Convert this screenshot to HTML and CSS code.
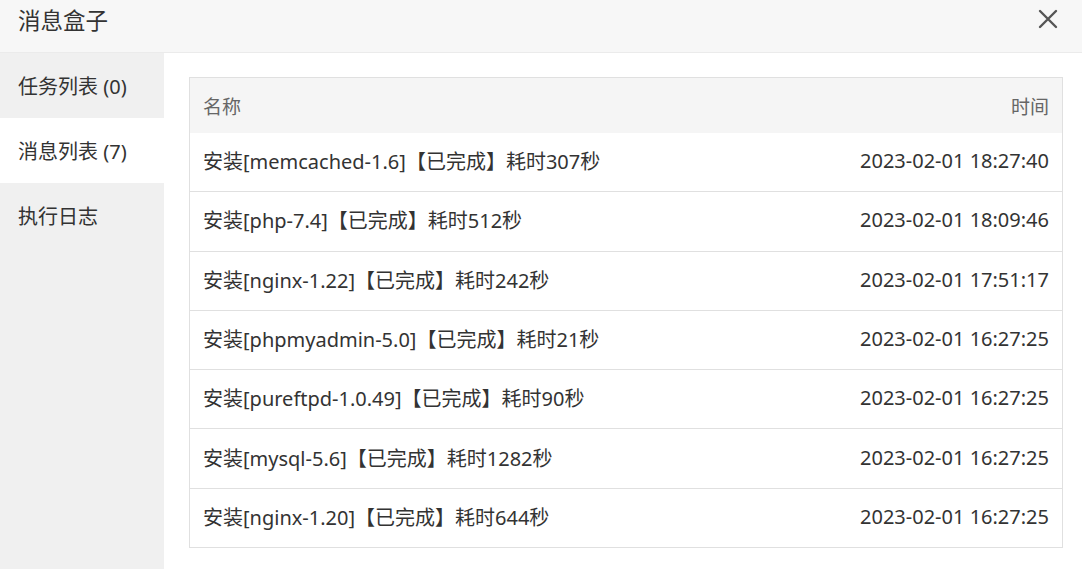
FILE: index.html
```html
<!DOCTYPE html>
<html lang="zh">
<head>
<meta charset="utf-8">
<link rel="stylesheet" href="styles.css">
</head>
<body>
<div class="dialog">
  <div class="header">
    <span class="title">消息盒子</span>
    <span class="close">
      <svg width="20" height="20" viewBox="0 0 20 20"><path d="M2 2 L18 18 M18 2 L2 18" stroke="#555" stroke-width="2.4" stroke-linecap="round"/></svg>
    </span>
  </div>
  <div class="body">
    <div class="sidebar">
      <div class="tab">任务列表 (0)</div>
      <div class="tab active">消息列表 (7)</div>
      <div class="tab">执行日志</div>
    </div>
    <div class="content">
      <div class="table">
        <div class="row head"><span>名称</span><span>时间</span></div>
        <div class="row"><span>安装[memcached-1.6]【已完成】耗时307秒</span><span>2023-02-01 18:27:40</span></div>
        <div class="row"><span>安装[php-7.4]【已完成】耗时512秒</span><span>2023-02-01 18:09:46</span></div>
        <div class="row"><span>安装[nginx-1.22]【已完成】耗时242秒</span><span>2023-02-01 17:51:17</span></div>
        <div class="row"><span>安装[phpmyadmin-5.0]【已完成】耗时21秒</span><span>2023-02-01 16:27:25</span></div>
        <div class="row"><span>安装[pureftpd-1.0.49]【已完成】耗时90秒</span><span>2023-02-01 16:27:25</span></div>
        <div class="row"><span>安装[mysql-5.6]【已完成】耗时1282秒</span><span>2023-02-01 16:27:25</span></div>
        <div class="row"><span>安装[nginx-1.20]【已完成】耗时644秒</span><span>2023-02-01 16:27:25</span></div>
      </div>
    </div>
  </div>
</div>
</body>
</html>
```

FILE: styles.css
```css
* { box-sizing: border-box; }
html, body { margin: 0; padding: 0; }
body {
  font-family: "Noto Sans", "Noto Sans CJK SC", sans-serif;
  color: #333;
  background: #fff;
  width: 1082px;
  height: 569px;
  overflow: hidden;
}
.dialog { display: flex; flex-direction: column; height: 569px; }
.header {
  height: 53px;
  background: #f7f7f7;
  border-bottom: 1px solid #ebebeb;
  display: flex;
  align-items: center;
  justify-content: space-between;
  padding: 0 24px 0 18px;
  flex-shrink: 0;
}
.title { font-size: 22.5px; color: #333; margin-top: -14px; }
.close { display: flex; margin-top: -14px; }
.body { display: flex; flex: 1; }
.sidebar { width: 164px; background: #f0f0f0; flex-shrink: 0; }
.tab {
  height: 65px;
  display: flex;
  align-items: center;
  padding-left: 18px;
  font-size: 20px;
  color: #333;
}
.tab.active { background: #fff; }
.content { flex: 1; padding: 24px 19px 0 25px; }
.table { border: 1px solid #e0e0e0; border-bottom: none; }
.row {
  height: 59.3px;
  display: flex;
  align-items: center;
  justify-content: space-between;
  padding: 0 13px 3px;
  border-bottom: 1px solid #e0e0e0;
  font-size: 20px;
  color: #333;
}
.row.head { height: 55px; background: #f5f5f5; color: #666; border-bottom: none; font-size: 19px; padding-bottom: 0; }
```
